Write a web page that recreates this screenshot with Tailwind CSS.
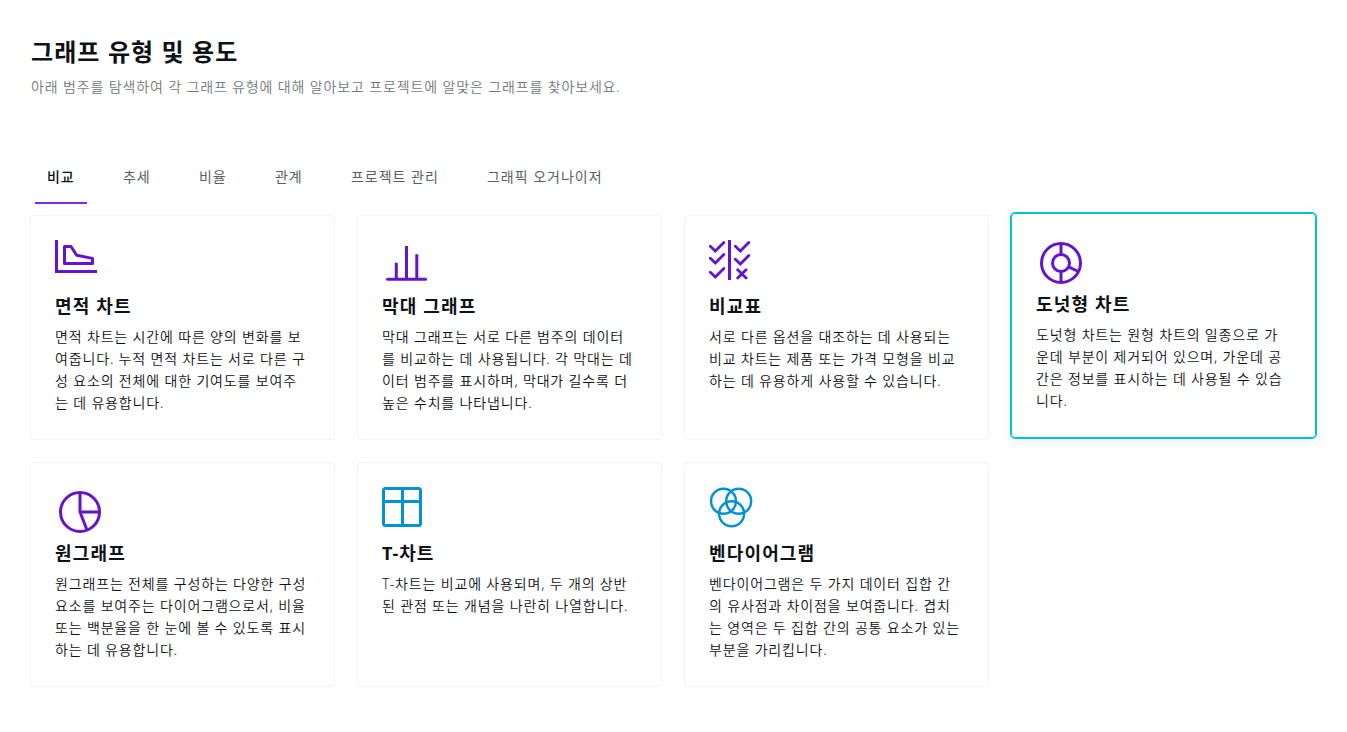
<!DOCTYPE html>
<html lang="ko">
<head>
    <meta charset="UTF-8">
    <meta name="viewport" content="width=device-width, initial-scale=1.0">
    <title>그래프 유형 및 용도</title>
    <!-- Tailwind CSS -->
    <script src="https://cdn.jsdelivr.net/npm/@tailwindcss/browser@4"></script>
</head>
<body class="bg-white text-[#0d1216] font-['Noto_Sans','Noto_Sans_CJK_KR',sans-serif] overflow-hidden">
    <main class="pl-[30px] pt-8">
        <!-- Heading -->
        <header class="pl-px">
            <h1 class="text-2xl leading-10 font-bold tracking-[1.1px]">그래프 유형 및 용도</h1>
            <p class="mt-1 text-sm leading-[22px] font-[350] tracking-[0.86px] text-[#73777b]">아래 범주를 탐색하여 각 그래프 유형에 대해 알아보고 프로젝트에 알맞은 그래프를 찾아보세요.</p>
        </header>

        <!-- Tabs -->
        <nav class="mt-[54px] pl-[5px] flex gap-6 text-sm leading-[22px] tracking-[0.98px] text-[#5a5e62] whitespace-nowrap">
            <a href="#" class="w-[52px] h-[52px] pt-[14px] pl-3 border-b-2 border-[#7d2ae8] font-medium text-[#0d1216]">비교</a>
            <a href="#" class="w-[52px] pt-[14px] pl-3">추세</a>
            <a href="#" class="w-[52px] pt-[14px] pl-3">비율</a>
            <a href="#" class="w-[52px] pt-[14px] pl-3">관계</a>
            <a href="#" class="w-[112px] pt-[14px] pl-3">프로젝트 관리</a>
            <a href="#" class="pt-[14px] pl-3">그래픽 오거나이저</a>
        </nav>

        <!-- Chart cards -->
        <div class="mt-[11px] grid grid-cols-[repeat(4,305px)] auto-rows-[225px] gap-[22px] whitespace-nowrap">
            <a href="#" class="border border-[#f2f3f5] rounded-[4px] p-6">
                <svg class="w-12 h-12" viewBox="0 0 48 48" fill="none" stroke="#6613d0" stroke-width="3">
                    <path d="M1.5 0V31.5H42"/>
                    <path d="M9.5 6.5H16L21.7 15.3L37.5 18.4V23.5H9.5Z" stroke-linejoin="round"/>
                </svg>
                <h3 class="mt-[6px] text-lg leading-6 font-bold tracking-[1.15px]">면적 차트</h3>
                <p class="mt-2 text-sm leading-[22px] font-[350] tracking-[0.84px]">면적 차트는 시간에 따른 양의 변화를 보<br>여줍니다. 누적 면적 차트는 서로 다른 구<br>성 요소의 전체에 대한 기여도를 보여주<br>는 데 유용합니다.</p>
            </a>

            <a href="#" class="border border-[#f2f3f5] rounded-[4px] p-6">
                <svg class="w-12 h-12" viewBox="0 0 48 48" fill="none" stroke="#6613d0" stroke-width="3">
                    <path d="M5.5 39.3H43.5" stroke-linecap="round"/>
                    <path d="M14.3 39V22.7M24.5 39V6M34.8 39V14.2"/>
                </svg>
                <h3 class="mt-[6px] text-lg leading-6 font-bold tracking-[1.15px]">막대 그래프</h3>
                <p class="mt-2 text-sm leading-[22px] font-[350] tracking-[0.84px]">막대 그래프는 서로 다른 범주의 데이터<br>를 비교하는 데 사용됩니다. 각 막대는 데<br>이터 범주를 표시하며, 막대가 길수록 더<br>높은 수치를 나타냅니다.</p>
            </a>

            <a href="#" class="border border-[#f2f3f5] rounded-[4px] p-6">
                <svg class="w-12 h-12" viewBox="0 0 48 48" fill="none" stroke="#6613d0" stroke-width="2.8">
                    <path d="M20.5 0V40" stroke-width="3"/>
                    <path d="M1.3 6.3L6.3 11L14.8 2.5M1.3 18.3L6.3 23L14.8 14.5M1.3 32.3L6.3 37L14.8 28.5" stroke-linecap="round"/>
                    <path d="M26.3 6.3L31.3 11L39.8 2.5M26.3 19.3L31.3 24L39.8 15.5M28.7 29.7L37.1 38.1M37.1 29.7L28.7 38.1" stroke-linecap="round"/>
                </svg>
                <h3 class="mt-[6px] text-lg leading-6 font-bold tracking-[1.15px]">비교표</h3>
                <p class="mt-2 text-sm leading-[22px] font-[350] tracking-[0.84px]">서로 다른 옵션을 대조하는 데 사용되는<br>비교 차트는 제품 또는 가격 모형을 비교<br>하는 데 유용하게 사용할 수 있습니다.</p>
            </a>

            <!-- Hovered card -->
            <a href="#" class="-translate-y-[2px] border border-[#00c4cc] ring-1 ring-[#00c4cc] rounded-[4px] p-6 shadow-[0_2px_12px_rgba(64,87,109,0.12)]">
                <svg class="w-12 h-12" viewBox="0 0 48 48" fill="none" stroke="#6613d0" stroke-width="3">
                    <circle cx="25" cy="25" r="19.5"/>
                    <circle cx="25" cy="25" r="8.5"/>
                    <path d="M25 5.5V16.5M25 33.5V44.5M32.6 28.8L42.4 33.5"/>
                </svg>
                <h3 class="mt-[6px] text-lg leading-6 font-bold tracking-[1.15px]">도넛형 차트</h3>
                <p class="mt-2 text-sm leading-[22px] font-[350] tracking-[0.84px]">도넛형 차트는 원형 차트의 일종으로 가<br>운데 부분이 제거되어 있으며, 가운데 공<br>간은 정보를 표시하는 데 사용될 수 있습<br>니다.</p>
            </a>

            <a href="#" class="border border-[#f2f3f5] rounded-[4px] p-6">
                <svg class="w-12 h-12" viewBox="0 0 48 48" fill="none" stroke="#6613d0" stroke-width="3">
                    <circle cx="25" cy="25" r="19.5"/>
                    <path d="M25 5.5V25H44.5M25 25L31.9 42.8" stroke-linejoin="round"/>
                </svg>
                <h3 class="mt-[6px] text-lg leading-6 font-bold tracking-[1.15px]">원그래프</h3>
                <p class="mt-2 text-sm leading-[22px] font-[350] tracking-[0.84px]">원그래프는 전체를 구성하는 다양한 구성<br>요소를 보여주는 다이어그램으로서, 비율<br>또는 백분율을 한 눈에 볼 수 있도록 표시<br>하는 데 유용합니다.</p>
            </a>

            <a href="#" class="border border-[#f2f3f5] rounded-[4px] p-6">
                <svg class="w-12 h-12" viewBox="0 0 48 48" fill="none" stroke="#0092d8" stroke-width="3">
                    <rect x="1.5" y="1.5" width="37" height="37" rx="2"/>
                    <path d="M20.5 1.5V38.5M1.5 14.5H38.5"/>
                </svg>
                <h3 class="mt-[6px] text-lg leading-6 font-bold tracking-[0.9px]">T-차트</h3>
                <p class="mt-2 text-sm leading-[22px] font-[350] tracking-[0.84px]">T-차트는 비교에 사용되며, 두 개의 상반<br>된 관점 또는 개념을 나란히 나열합니다.</p>
            </a>

            <a href="#" class="border border-[#f2f3f5] rounded-[4px] p-6">
                <svg class="w-12 h-12" viewBox="0 0 48 48" fill="none" stroke="#0092d8" stroke-width="2.5">
                    <circle cx="14.5" cy="14.3" r="12.5"/>
                    <circle cx="29.7" cy="14.3" r="12.5"/>
                    <circle cx="22.6" cy="26.7" r="12.5"/>
                </svg>
                <h3 class="mt-[6px] text-lg leading-6 font-bold tracking-[1.15px]">벤다이어그램</h3>
                <p class="mt-2 text-sm leading-[22px] font-[350] tracking-[0.84px]">벤다이어그램은 두 가지 데이터 집합 간<br>의 유사점과 차이점을 보여줍니다. 겹치<br>는 영역은 두 집합 간의 공통 요소가 있는<br>부분을 가리킵니다.</p>
            </a>
        </div>
    </main>
</body>
</html>
